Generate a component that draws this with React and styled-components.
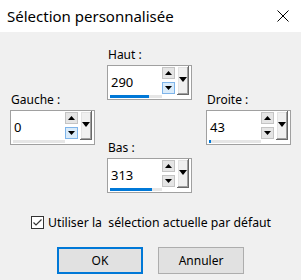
import React from "react";
import styled, { createGlobalStyle } from "styled-components";

const GlobalStyle = createGlobalStyle`
  html, body {
    margin: 0;
    padding: 0;
  }
  body {
    background: #f0f0f0;
    font-family: "Noto Sans", "Liberation Sans", sans-serif;
    color: #000;
  }
`;

const Dialog = styled.div`
  width: 301px;
  height: 280px;
  background: #f0f0f0;
  display: flex;
  flex-direction: column;
  overflow: hidden;
`;

const TitleBar = styled.div`
  height: 32px;
  flex-shrink: 0;
  background: #fff;
  display: flex;
  align-items: center;
  justify-content: space-between;
  padding-left: 7px;
`;

const Title = styled.span`
  font-size: 15px;
`;

const CloseButton = styled.button`
  width: 36px;
  height: 32px;
  padding: 0;
  border: 0;
  background: transparent;
  display: flex;
  align-items: center;
  justify-content: center;
`;

const Fields = styled.div`
  display: flex;
  padding-left: 10px;
`;

const Column = styled.div`
  display: flex;
  flex-direction: column;
  width: 85px;
  padding-top: ${props => props.$top}px;
  margin-left: ${props => props.$left || 0}px;
`;

const Field = styled.div`
  display: flex;
  flex-direction: column;
  margin-top: ${props => props.$gap || 0}px;
`;

const Label = styled.label`
  font-size: 12px;
  line-height: 16px;
  height: 16px;
  margin-bottom: 2px;
  padding-left: 1px;
`;

const SpinBox = styled.div`
  width: 85px;
  height: 35px;
  box-sizing: border-box;
  border: 1px solid #a0a0a0;
  background: #fff;
  display: flex;
  align-items: flex-start;
  padding: 0 2px 0 2px;
`;

const ValueArea = styled.div`
  width: 52px;
  height: 32px;
  display: flex;
  flex-direction: column;
`;

const Value = styled.span`
  flex: 1;
  display: flex;
  align-items: center;
  font-size: 13px;
  padding: 2px 0 0 1px;
`;

const Track = styled.div`
  height: 3px;
  background: #e6e6e6;
`;

const Fill = styled.div`
  height: 100%;
  background: #0078d7;
`;

const Spinner = styled.div`
  width: 13px;
  margin-top: 1px;
  display: flex;
  flex-direction: column;
  gap: 3px;
`;

const SpinButton = styled.div`
  height: 12px;
  box-sizing: border-box;
  border: 1px solid ${props => (props.$hot ? "#7eb4ea" : "#c4c4c4")};
  background: ${props => (props.$hot ? "#d9ebfa" : "#e5e5e5")};
  display: flex;
  align-items: center;
  justify-content: center;
`;

const DropButton = styled.div`
  width: 12px;
  height: 29px;
  margin-left: 2px;
  background: #f0f0f0;
  box-shadow: inset -1px -1px #696969, inset 1px 1px #fff,
    inset -2px -2px #a0a0a0, inset 2px 2px #e3e3e3;
  display: flex;
  align-items: center;
  justify-content: center;
  padding-bottom: 2px;
  box-sizing: border-box;
`;

const CheckRow = styled.label`
  display: flex;
  align-items: center;
  gap: 4px;
  height: 16px;
  margin-top: 21px;
  padding-left: 31px;
  font-size: 12.25px;
  white-space: pre;
`;

const CheckBox = styled.span`
  width: 13px;
  height: 13px;
  box-sizing: border-box;
  border: 1px solid #333;
  background: #fff;
  display: flex;
`;

const Buttons = styled.div`
  display: flex;
  gap: 15px;
  margin-top: 17px;
  padding-left: 57px;
`;

const Button = styled.button`
  width: 86px;
  height: 27px;
  box-sizing: border-box;
  border: ${props => (props.$primary ? "2px solid #0078d7" : "1px solid #adadad")};
  background: #e1e1e1;
  font-family: inherit;
  font-size: 12px;
  color: #000;
  padding: 0;
`;

const Triangle = ({ w, h, down }) => (
  <svg width={w} height={h} viewBox={`0 0 ${w} ${h}`}>
    <polygon
      points={down ? `0,0 ${w},0 ${w / 2},${h}` : `0,${h} ${w},${h} ${w / 2},0`}
      fill="#000"
    />
  </svg>
);

const Spin = ({ label, value, fill, hot, gap }) => (
  <Field $gap={gap}>
    <Label>{label}</Label>
    <SpinBox>
      <ValueArea>
        <Value>{value}</Value>
        <Track>
          <Fill style={{ width: `${fill * 100}%` }} />
        </Track>
      </ValueArea>
      <Spinner>
        <SpinButton>
          <Triangle w={7} h={4} />
        </SpinButton>
        <SpinButton $hot={hot}>
          <Triangle w={7} h={4} down />
        </SpinButton>
      </Spinner>
      <DropButton>
        <Triangle w={8} h={5} down />
      </DropButton>
    </SpinBox>
  </Field>
);

export default function App() {
  return (
    <Dialog>
      <GlobalStyle />
      <TitleBar>
        <Title>Sélection personnalisée</Title>
        <CloseButton>
          <svg width="12" height="12" viewBox="0 0 12 12">
            <path d="M0.5 0.5 L11.5 11.5 M11.5 0.5 L0.5 11.5" stroke="#000" strokeWidth="1" />
          </svg>
        </CloseButton>
      </TitleBar>
      <Fields>
        <Column $top={60}>
          <Spin label="Gauche :" value="0" fill={0} hot />
        </Column>
        <Column $top={15} $left={12}>
          <Spin label="Haut :" value="290" fill={0.75} hot />
          <Spin label="Bas :" value="313" fill={0.81} gap={40} />
        </Column>
        <Column $top={60} $left={14}>
          <Spin label="Droite :" value="43" fill={0.04} />
        </Column>
      </Fields>
      <CheckRow>
        <CheckBox>
          <svg width="11" height="11" viewBox="0 0 11 11">
            <path d="M1.5 5.5 L4 8 L9.5 2.5" stroke="#333" strokeWidth="1.2" fill="none" />
          </svg>
        </CheckBox>
        {"Utiliser la  sélection actuelle par défaut"}
      </CheckRow>
      <Buttons>
        <Button $primary>OK</Button>
        <Button>Annuler</Button>
      </Buttons>
    </Dialog>
  );
}
